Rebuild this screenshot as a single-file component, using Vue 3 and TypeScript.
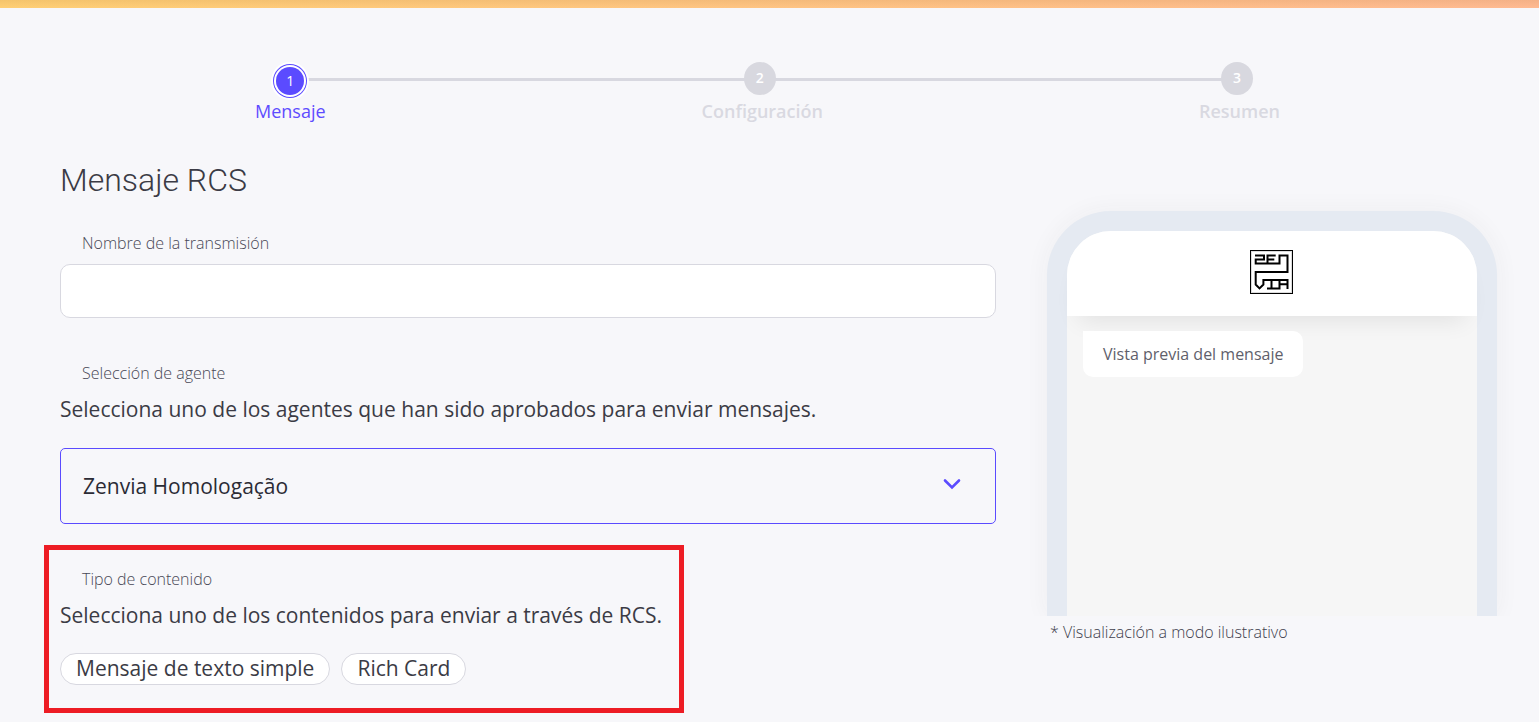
<script setup lang="ts">
import { ref } from 'vue'

interface Step {
  number: number
  label: string
}

const steps: Step[] = [
  { number: 1, label: 'Mensaje' },
  { number: 2, label: 'Configuración' },
  { number: 3, label: 'Resumen' },
]
const currentStep = ref(1)

const broadcastName = ref('')
const agents: string[] = ['Zenvia Homologação']
const agent = ref(agents[0])

const contentTypes: string[] = ['Mensaje de texto simple', 'Rich Card']
const contentType = ref('')
</script>

<template>
  <div class="page">
    <div class="top-bar"></div>

    <ol class="stepper">
      <li
        v-for="step in steps"
        :key="step.number"
        class="step"
        :class="{ active: step.number === currentStep }"
      >
        <span class="bullet-row"><span class="bullet">{{ step.number }}</span></span>
        <span class="step-label">{{ step.label }}</span>
      </li>
    </ol>

    <main class="content">
      <form class="form" @submit.prevent>
        <h1 class="title">Mensaje RCS</h1>

        <label class="field-label" for="broadcast-name">Nombre de la transmisión</label>
        <input id="broadcast-name" v-model="broadcastName" class="text-input" type="text" />

        <label class="field-label agent-label" for="agent">Selección de agente</label>
        <p class="hint">Selecciona uno de los agentes que han sido aprobados para enviar mensajes.</p>
        <div class="select-box">
          <select id="agent" v-model="agent" class="select">
            <option v-for="name in agents" :key="name" :value="name">{{ name }}</option>
          </select>
          <svg class="chevron" viewBox="0 0 18 12" aria-hidden="true">
            <path d="M2 2.5 L9 9.5 L16 2.5" />
          </svg>
        </div>

        <section class="highlight" aria-labelledby="content-label">
          <h2 id="content-label" class="field-label">Tipo de contenido</h2>
          <p class="hint">Selecciona uno de los contenidos para enviar a través de RCS.</p>
          <div class="chips">
            <button
              v-for="type in contentTypes"
              :key="type"
              class="chip"
              type="button"
              :aria-pressed="contentType === type"
              @click="contentType = type"
            >
              {{ type }}
            </button>
          </div>
        </section>
      </form>

      <aside class="preview">
        <div class="phone">
          <div class="phone-header">
            <svg class="logo" viewBox="0 0 43 44" role="img" aria-label="Zenvia">
              <rect class="frame-soft" x="1.5" y="1.5" width="40" height="41" />
              <rect class="frame" x="0.5" y="0.5" width="42" height="43" />
              <path
                class="mark"
                d="M5 5.5H14V9.5H5.7V13.5H29.5V5.5H37.5V22H5.7V34.5L9.5 38.4L13.4 34.5V30H37.5V39
                   M17.5 13.5V5.5H25.7 M17.5 9.5H24.3
                   M21.5 30V38.4 M17 38.4H29.5V30 M29.5 34.3H37.5"
              />
            </svg>
          </div>
          <div class="phone-screen">
            <p class="bubble">Vista previa del mensaje</p>
          </div>
        </div>
        <p class="note">* Visualización a modo ilustrativo</p>
      </aside>
    </main>
  </div>
</template>

<style>
body {
  margin: 0;
  background: #f7f7fa;
}
</style>

<style scoped>
.page {
  min-height: 100vh;
  box-sizing: border-box;
  overflow: hidden;
  background: #f7f7fa;
  color: #3b3b45;
  font-family: "Open Sans", "Noto Sans", sans-serif;
  font-weight: 400;
}

.top-bar {
  height: 8px;
  background:
    linear-gradient(180deg, rgba(120, 70, 0, 0.08), transparent),
    linear-gradient(90deg, #ffcf75, #ffba92);
}

.stepper {
  position: relative;
  display: flex;
  justify-content: space-between;
  margin: 54px 259px 0 255px;
  padding: 0;
  list-style: none;
}

.stepper::before {
  content: "";
  position: absolute;
  top: 16px;
  left: 36px;
  right: 40px;
  height: 3px;
  background: #d8d8e0;
}

.step {
  position: relative;
  display: flex;
  flex-direction: column;
  align-items: center;
  color: #d9d9e1;
  font-weight: 600;
}

.bullet-row {
  display: flex;
  height: 36px;
}

.bullet {
  box-sizing: border-box;
  width: 32px;
  height: 33px;
  margin-right: 5px;
  border-radius: 50%;
  background: #d8d8df;
  color: #fff;
  font-size: 14px;
  line-height: 31px;
  text-align: center;
}

.step-label {
  font-size: 18px;
  line-height: 26px;
}

.step.active {
  color: #5e4cff;
  font-weight: 400;
}

.active .bullet {
  width: 28px;
  height: 28px;
  margin: 5px 0 0;
  background: #5b4bff;
  line-height: 28px;
  box-shadow: 0 0 0 2px #fff, 0 0 0 3px #5b4bff, 0 0 0 5px #fff;
}

.content {
  display: flex;
  align-items: flex-start;
  gap: 51px;
  padding: 0 42px 0 60px;
}

.form {
  flex: 1;
  min-width: 0;
}

.title {
  margin: 32px 0 0;
  font-family: Roboto, sans-serif;
  font-size: 32px;
  line-height: 48px;
  font-weight: 300;
}

.field-label {
  display: block;
  margin: 0 0 0 22px;
  color: #484856;
  font-size: 16px;
  line-height: 24px;
  font-weight: 300;
}

.title + .field-label {
  margin-top: 27px;
}

.text-input {
  display: block;
  box-sizing: border-box;
  width: 100%;
  height: 54px;
  margin-top: 9px;
  padding: 0 22px;
  border: 1px solid #d8d8e0;
  border-radius: 10px;
  outline: none;
  background: #fff;
  color: inherit;
  font: inherit;
}

.agent-label {
  margin-top: 43px;
}

.hint {
  margin: 8px 0 0;
  font-size: 21px;
  line-height: 32px;
}

.select-box {
  position: relative;
  margin-top: 23px;
}

.select {
  display: block;
  box-sizing: border-box;
  width: 100%;
  height: 76px;
  padding: 0 60px 0 22px;
  border: 1px solid #5b4bff;
  border-radius: 5px;
  outline: none;
  appearance: none;
  background: #f7f7fa;
  color: #2b2b35;
  font-family: inherit;
  font-size: 21px;
  font-weight: 400;
}

.chevron {
  position: absolute;
  top: 30px;
  right: 35px;
  width: 18px;
  height: 12px;
  fill: none;
  stroke: #5b4bff;
  stroke-width: 2.6;
  stroke-linecap: round;
  pointer-events: none;
}

.highlight {
  box-sizing: border-box;
  width: 640px;
  max-width: 100%;
  margin: 21px 0 0 -16px;
  padding: 17px 11px 23px;
  border: 5px solid #ed1c24;
}

.chips {
  display: flex;
  gap: 11px;
  margin-top: 22px;
}

.chip {
  box-sizing: border-box;
  height: 32px;
  padding: 0 15px 2px;
  border: 1px solid #d8d8e0;
  border-radius: 16px;
  background: #fff;
  color: inherit;
  font-family: inherit;
  font-size: 21px;
  line-height: 28px;
  white-space: nowrap;
}

.preview {
  flex: 0 0 450px;
  margin-top: 87px;
}

.phone {
  box-sizing: border-box;
  height: 405px;
  border: 20px solid #e5eaf2;
  border-bottom: 0;
  border-radius: 64px 64px 0 0;
  background: #f6f6f6;
  box-shadow: 0 0 24px rgba(60, 60, 60, 0.05);
  clip-path: inset(-30px -30px 0 -30px);
}

.phone-header {
  display: flex;
  align-items: center;
  justify-content: center;
  box-sizing: border-box;
  height: 85px;
  padding: 0 2px 4px 0;
  border-radius: 44px 44px 0 0;
  background: #fff;
  box-shadow: 0 16px 24px -12px rgba(0, 0, 0, 0.09);
}

.logo {
  width: 43px;
  height: 44px;
  fill: none;
  stroke: #000;
}

.frame {
  stroke-width: 1;
}

.frame-soft {
  stroke: #dcdcdc;
}

.mark {
  stroke-width: 2;
}

.phone-screen {
  display: flex;
  padding: 15px 16px;
}

.bubble {
  position: relative;
  margin: 0;
  padding: 11px 20px;
  border-radius: 0 10px 10px 10px;
  background: #fff;
  color: #5f5f6b;
  font-size: 16px;
  line-height: 24px;
}

.note {
  margin: 4px 0 0 3px;
  color: #40404d;
  font-size: 16px;
  line-height: 24px;
  font-weight: 300;
}
</style>
